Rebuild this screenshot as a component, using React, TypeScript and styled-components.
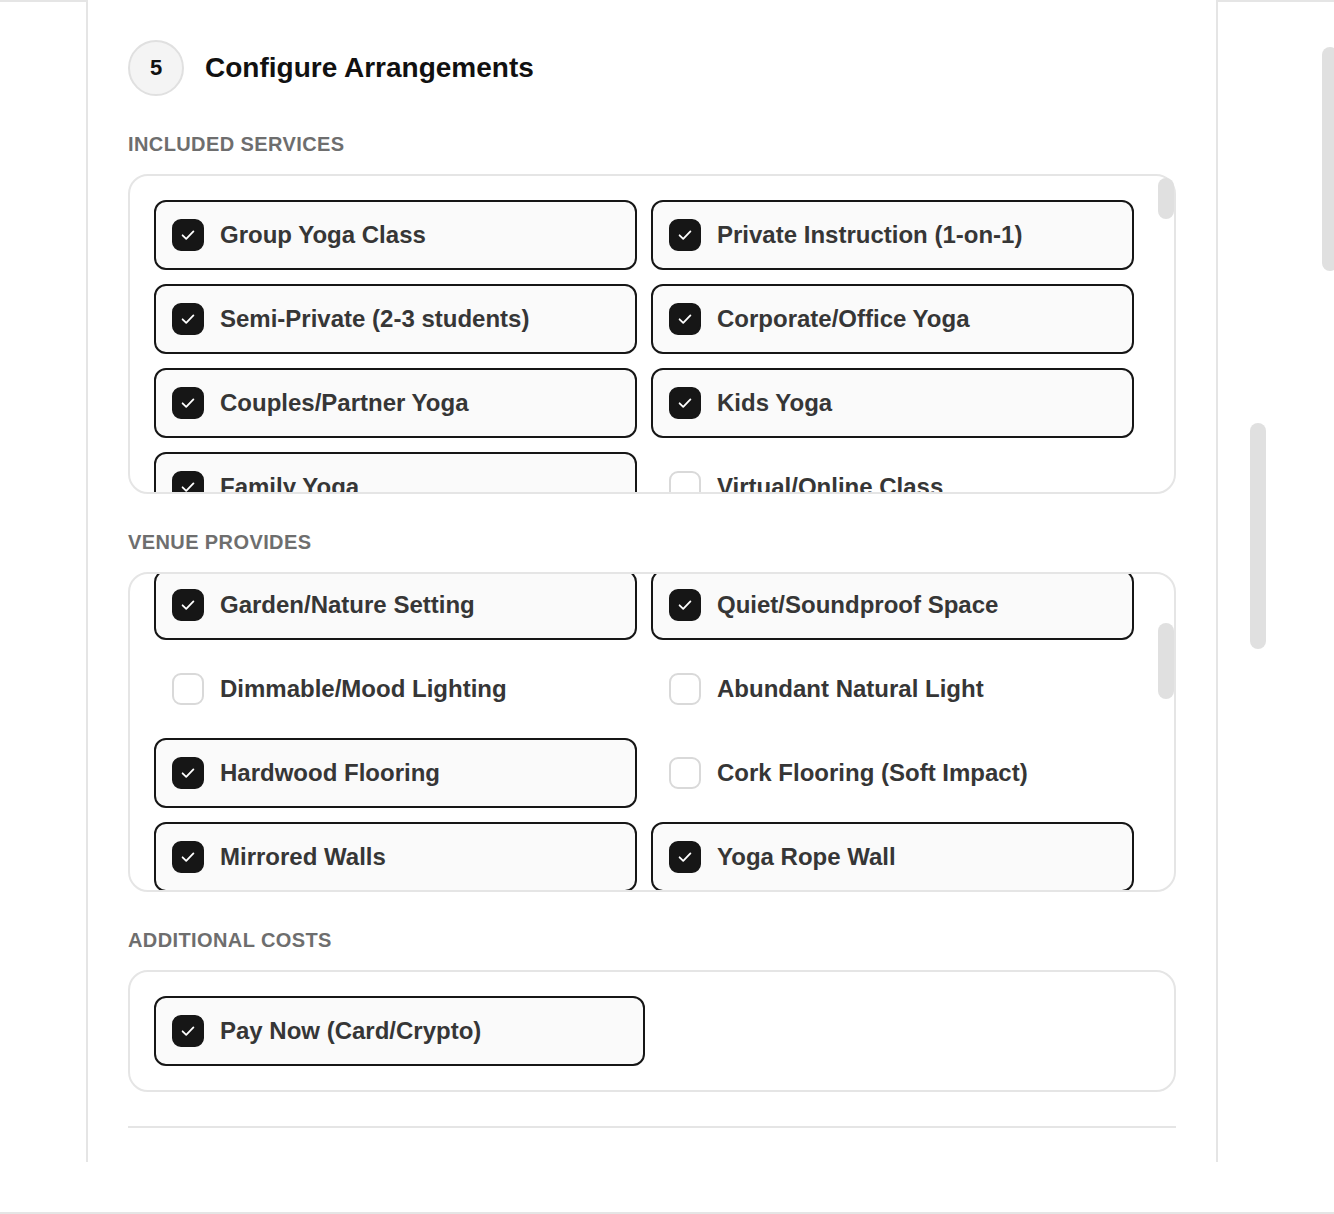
import React, { useLayoutEffect, useRef, useState } from "react";
import styled, { createGlobalStyle } from "styled-components";

const GlobalStyle = createGlobalStyle`
  html, body { margin: 0; padding: 0; background: #ffffff; overflow: hidden; }
  body { font-family: "Liberation Sans", Arial, Helvetica, sans-serif; }
  *, *::before, *::after { box-sizing: border-box; }
`;

const Page = styled.div`
  width: 1334px;
  height: 1214px;
  display: flex;
  flex-direction: column;
  overflow: hidden;
`;

const Stage = styled.div`
  flex: 1;
  display: flex;
  align-items: flex-start;
`;

const LeftGutter = styled.div`
  width: 86px;
  flex-shrink: 0;
  align-self: stretch;
  border-top: 2px solid #e5e5e5;
`;

const RightGutter = styled.aside`
  flex: 1;
  align-self: stretch;
  border-top: 2px solid #e5e5e5;
  display: flex;
  gap: 56px;
  padding-left: 32px;
`;

const Track = styled.div`
  width: 16px;
  flex-shrink: 0;
`;

const Thumb = styled.div<{ $top: number; $height: number }>`
  margin-top: ${(p) => p.$top}px;
  height: ${(p) => p.$height}px;
  width: 16px;
  border-radius: 8px;
  background: #e0e0e0;
`;

const Column = styled.main`
  width: 1132px;
  flex-shrink: 0;
  border-left: 2px solid #e5e5e5;
  border-right: 2px solid #e5e5e5;
  padding: 40px 40px 34px;
  display: flex;
  flex-direction: column;
`;

const Header = styled.header`
  display: flex;
  align-items: center;
  gap: 21px;
  height: 56px;
`;

const StepBadge = styled.div`
  width: 56px;
  height: 56px;
  border-radius: 50%;
  border: 2px solid #e0e0e0;
  background: #f4f4f4;
  display: flex;
  align-items: center;
  justify-content: center;
  font-size: 22px;
  font-weight: 700;
  color: #111111;
`;

const Title = styled.h2`
  margin: 0;
  font-size: 28px;
  font-weight: 700;
  color: #111111;
`;

const Section = styled.section`
  margin-top: 37px;
  display: flex;
  flex-direction: column;
  gap: 19px;
`;

const SectionLabel = styled.h3`
  margin: 0;
  font-size: 20px;
  line-height: 22px;
  font-weight: 700;
  letter-spacing: 0.4px;
  text-transform: uppercase;
  color: #6e6e6e;
`;

const Panel = styled.div`
  position: relative;
  border: 2px solid #e5e5e5;
  border-radius: 20px;
  background: #ffffff;
`;

const Scroller = styled.div<{ $scrollable: boolean }>`
  max-height: 316px;
  overflow-y: auto;
  padding: 24px ${(p) => (p.$scrollable ? 40 : 24)}px 24px 24px;
  scrollbar-width: none;

  &::-webkit-scrollbar {
    display: none;
  }
`;

const ScrollThumb = styled.div`
  position: absolute;
  right: 0;
  width: 16px;
  border-radius: 8px;
  background: #e0e0e0;
`;

const Grid = styled.div`
  display: grid;
  grid-template-columns: 1fr 1fr;
  gap: 14px;
`;

const Option = styled.label<{ $checked: boolean }>`
  display: flex;
  align-items: center;
  gap: 16px;
  height: 70px;
  padding: 0 16px;
  border: 2px solid ${(p) => (p.$checked ? "#161616" : "transparent")};
  border-radius: 12px;
  background: ${(p) => (p.$checked ? "#fafafa" : "transparent")};
  font-size: 24px;
  font-weight: 700;
  color: #363636;
  white-space: nowrap;
  cursor: pointer;
`;

const Box = styled.span<{ $checked: boolean }>`
  width: 32px;
  height: 32px;
  flex-shrink: 0;
  border-radius: 9px;
  display: flex;
  align-items: center;
  justify-content: center;
  background: ${(p) => (p.$checked ? "#161616" : "#ffffff")};
  border: 2px solid ${(p) => (p.$checked ? "#161616" : "#d9d9d9")};
`;

const Divider = styled.hr`
  margin: 34px 0 0;
  border: 0;
  height: 2px;
  background: #e5e5e5;
`;

const FooterLine = styled.div`
  height: 2px;
  flex-shrink: 0;
  background: #e5e5e5;
`;

type Item = [string, boolean];

const services: Item[] = [
  ["Group Yoga Class", true],
  ["Private Instruction (1-on-1)", true],
  ["Semi-Private (2-3 students)", true],
  ["Corporate/Office Yoga", true],
  ["Couples/Partner Yoga", true],
  ["Kids Yoga", true],
  ["Family Yoga", true],
  ["Virtual/Online Class", false],
  ["Prenatal Yoga", false],
  ["Postnatal Yoga", false],
  ["Senior/Chair Yoga", false],
  ["Hatha Yoga", true],
  ["Vinyasa Flow", true],
  ["Ashtanga Yoga", false],
  ["Iyengar Yoga", false],
  ["Kundalini Yoga", false],
  ["Yin Yoga", true],
  ["Restorative Yoga", true],
  ["Hot Yoga", false],
  ["Power Yoga", false],
  ["Aerial Yoga", false],
  ["Acro Yoga", false],
  ["Bikram Yoga", false],
  ["Jivamukti Yoga", false],
  ["Anusara Yoga", false],
  ["Sivananda Yoga", false],
  ["Forrest Yoga", false],
  ["Rocket Yoga", false],
  ["Yoga Nidra", true],
  ["Meditation Session", true],
  ["Pranayama/Breathwork", true],
  ["Sound Bath", false],
  ["Mantra/Chanting", false],
  ["Yoga Therapy", false],
  ["Trauma-Informed Yoga", false],
  ["Adaptive Yoga", false],
  ["Yoga for Athletes", false],
  ["Yoga for Back Pain", false],
  ["Mobility & Stretching", true],
  ["Pilates Fusion", false],
  ["SUP/Paddleboard Yoga", false],
  ["Beach Yoga", false],
  ["Outdoor/Park Yoga", false],
  ["Retreat Session", false],
  ["Workshop/Masterclass", false],
  ["Teacher Training", false],
  ["Alignment Clinic", false],
  ["Inversion Workshop", false],
  ["Arm Balance Workshop", false],
  ["Beginner Fundamentals", true],
  ["Flexibility Assessment", false],
  ["Posture Analysis", false],
  ["Goat Yoga", false],
  ["Laughter Yoga", false],
  ["Face Yoga", false],
  ["Chakra Balancing", false],
];

const venue: Item[] = [
  ["Yoga Mats Provided", true],
  ["Props (Blocks & Straps)", true],
  ["Bolsters & Blankets", false],
  ["Changing Rooms", true],
  ["Garden/Nature Setting", true],
  ["Quiet/Soundproof Space", true],
  ["Dimmable/Mood Lighting", false],
  ["Abundant Natural Light", false],
  ["Hardwood Flooring", true],
  ["Cork Flooring (Soft Impact)", false],
  ["Mirrored Walls", true],
  ["Yoga Rope Wall", true],
  ["Aerial Rigging Points", false],
  ["Heated Studio", false],
  ["Air Conditioning", true],
  ["Sound System", true],
  ["Shower Facilities", false],
  ["Lockers", false],
  ["Towel Service", false],
  ["Filtered Water Station", true],
  ["Wheelchair Accessible", false],
  ["Free Parking", false],
  ["Bike Storage", false],
  ["Reception Lounge", false],
  ["Tea/Refreshment Bar", false],
  ["Outdoor Deck", false],
  ["Private Entrance", false],
  ["Childcare Area", false],
  ["Meditation Room", false],
  ["Infrared Sauna", false],
];

const costs: Item[] = [["Pay Now (Card/Crypto)", true]];

const CheckMark = () => (
  <svg width="18" height="18" viewBox="0 0 18 18" fill="none" aria-hidden="true">
    <path
      d="M3.6 9.3 7.2 12.8 14.4 5.4"
      stroke="#ffffff"
      strokeWidth="1.8"
      strokeLinecap="round"
      strokeLinejoin="round"
    />
  </svg>
);

const OptionGrid = ({ items }: { items: Item[] }) => (
  <Grid>
    {items.map(([label, checked]) => (
      <Option key={label} $checked={checked}>
        <Box $checked={checked}>{checked && <CheckMark />}</Box>
        {label}
      </Option>
    ))}
  </Grid>
);

const OptionPanel = ({
  items,
  scrollable = false,
  initialScroll = 0,
}: {
  items: Item[];
  scrollable?: boolean;
  initialScroll?: number;
}) => {
  const ref = useRef<HTMLDivElement>(null);
  const [thumb, setThumb] = useState<{ top: number; height: number } | null>(null);

  useLayoutEffect(() => {
    const el = ref.current;
    if (!el || !scrollable) return;
    el.scrollTop = initialScroll;
    const update = () => {
      const track = el.clientHeight - 4;
      const ratio = el.clientHeight / el.scrollHeight;
      setThumb({
        top: 2 + (el.scrollTop / el.scrollHeight) * track,
        height: Math.max(24, ratio * track),
      });
    };
    update();
    el.addEventListener("scroll", update);
    return () => el.removeEventListener("scroll", update);
  }, [scrollable, initialScroll]);

  return (
    <Panel>
      <Scroller ref={ref} $scrollable={scrollable}>
        <OptionGrid items={items} />
      </Scroller>
      {thumb && <ScrollThumb style={{ top: thumb.top, height: thumb.height }} />}
    </Panel>
  );
};

export default function App() {
  return (
    <>
      <GlobalStyle />
      <Page>
        <Stage>
          <LeftGutter />
          <Column>
            <Header>
              <StepBadge>5</StepBadge>
              <Title>Configure Arrangements</Title>
            </Header>

            <Section>
              <SectionLabel>Included Services</SectionLabel>
              <OptionPanel items={services} scrollable />
            </Section>

            <Section>
              <SectionLabel>Venue Provides</SectionLabel>
              <OptionPanel items={venue} scrollable initialScroll={196} />
            </Section>

            <Section>
              <SectionLabel>Additional Costs</SectionLabel>
              <OptionPanel items={costs} />
            </Section>

            <Divider />
          </Column>
          <RightGutter>
            <Track>
              <Thumb $top={421} $height={226} />
            </Track>
            <Track>
              <Thumb $top={45} $height={224} />
            </Track>
          </RightGutter>
        </Stage>
        <FooterLine />
      </Page>
    </>
  );
}
